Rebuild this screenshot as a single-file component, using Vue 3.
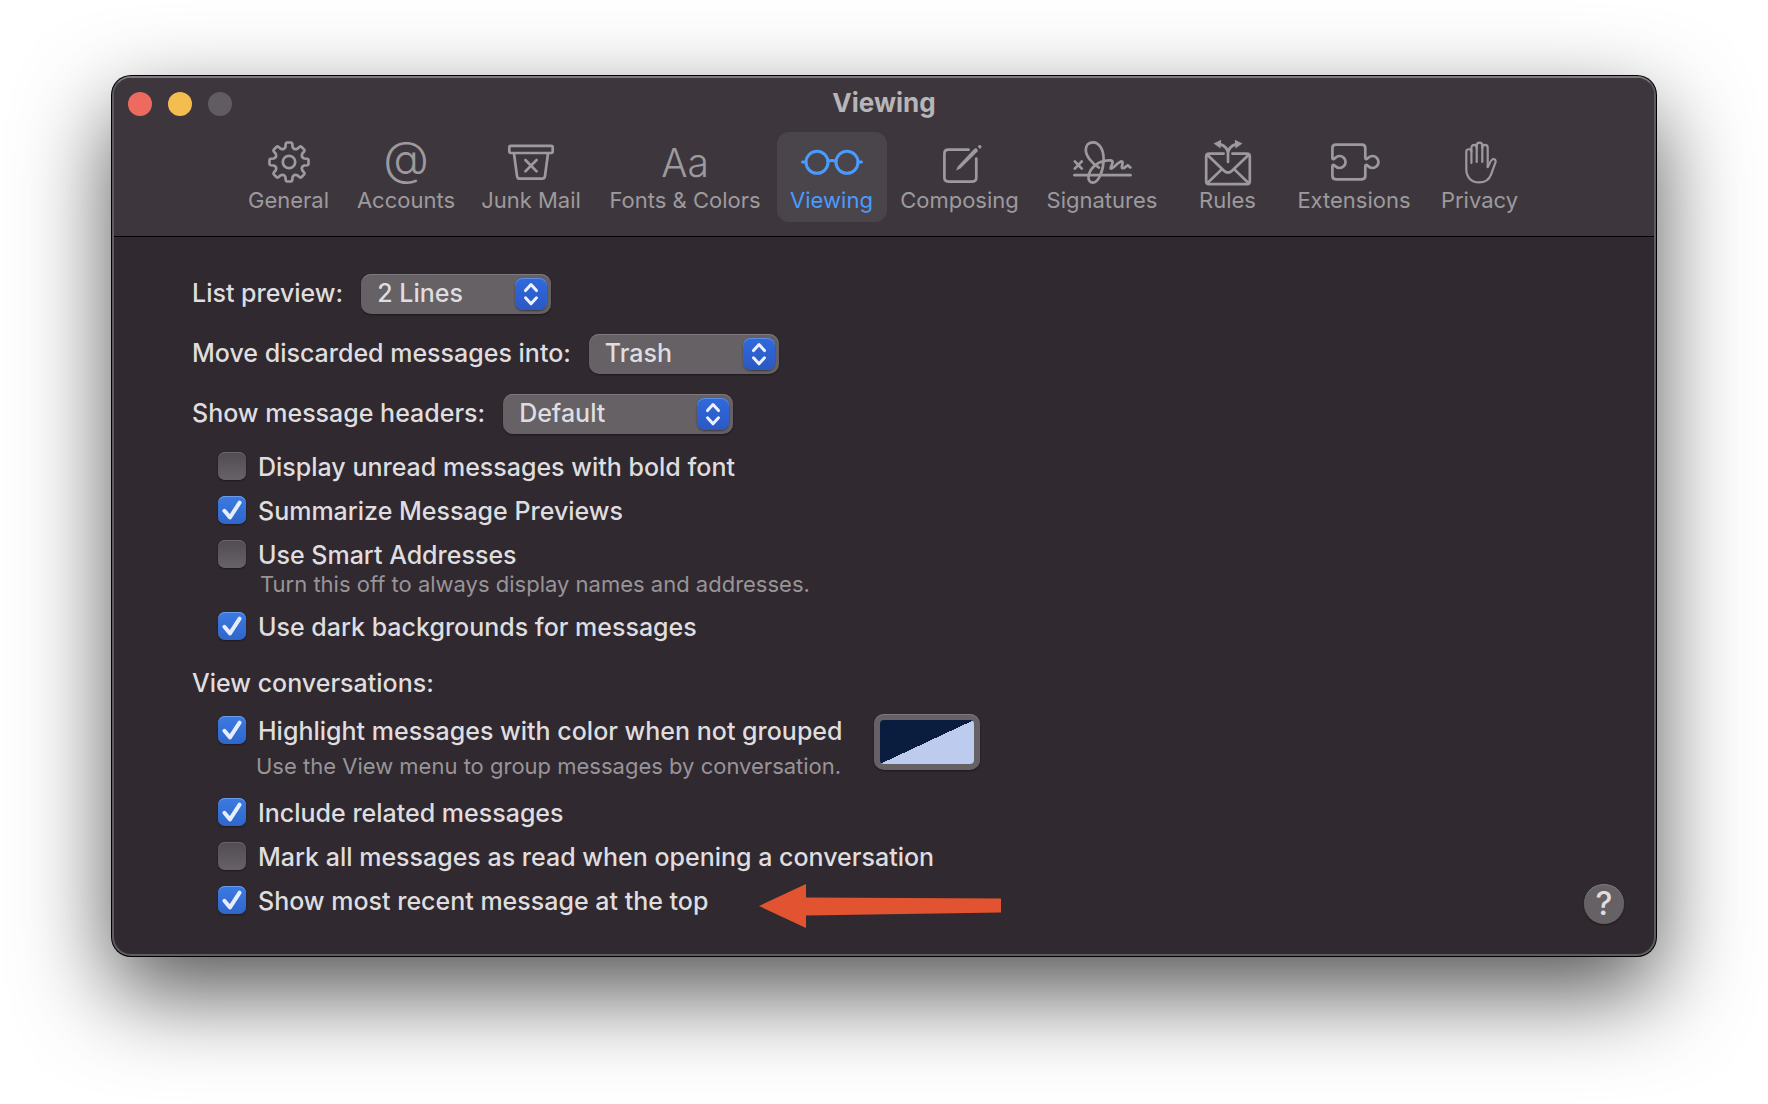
<script setup>
import { ref } from 'vue'

const active = ref('viewing')

function gearPath(cx, cy, outer, root) {
  const point = (deg, r) => {
    const a = (deg * Math.PI) / 180
    return `${(cx + r * Math.sin(a)).toFixed(2)} ${(cy - r * Math.cos(a)).toFixed(2)}`
  }
  let d = ''
  for (let i = 0; i < 8; i++) {
    const a = i * 45
    d += `${i ? 'L' : 'M'}${point(a - 13, root + 1.5)} L${point(a - 10, outer - 1)} Q${point(a - 9, outer)} ${point(a - 6, outer)} `
    d += `L${point(a + 6, outer)} Q${point(a + 9, outer)} ${point(a + 10, outer - 1)} L${point(a + 13, root + 1.5)} `
    d += `Q${point(a + 22.5, root - 1.6)} ${point(a + 32, root + 1.5)} `
  }
  return d + 'Z'
}

const tabs = [
  { id: 'general', label: 'General', width: 110, paths: [gearPath(32, 24, 19.6, 14.2), 'M25.8 24a6.2 6.2 0 1 0 12.4 0a6.2 6.2 0 1 0 -12.4 0'] },
  { id: 'accounts', label: 'Accounts', width: 125, glyph: '@' },
  {
    id: 'junk', label: 'Junk Mail', width: 125,
    paths: [
      'M11.7 7.8H52.3Q53.7 7.8 53.7 9.2V13.6Q53.7 15 52.3 15H11.7Q10.3 15 10.3 13.6V9.2Q10.3 7.8 11.7 7.8Z',
      'M15 15.5L18 38Q18.4 40.7 21 40.7H43Q45.6 40.7 46 38L49 15.5',
      'M26.4 22L37.6 33.4M37.6 22L26.4 33.4',
    ],
  },
  { id: 'fonts', label: 'Fonts & Colors', width: 183, glyph: 'Aa' },
  {
    id: 'viewing', label: 'Viewing', width: 110, stroke: 3,
    paths: [
      'M6 24.3a11 11 0 1 0 22 0a11 11 0 1 0 -22 0',
      'M36 24.3a11 11 0 1 0 22 0a11 11 0 1 0 -22 0',
      'M2.5 24H6M58 24H61.5M28 23.4Q32 21.6 36 23.4',
    ],
  },
  {
    id: 'composing', label: 'Composing', width: 146,
    paths: ['M40.5 11.7H20.4Q16.4 11.7 16.4 15.7V39.6Q16.4 43.6 20.4 43.6H44.3Q48.3 43.6 48.3 39.6V20.5'],
    fills: ['M28 32.6L30 28.2L46.6 10.6Q48.2 9.8 49.4 11L49.8 13.2L32.4 30.4Z', 'M49.6 8.4L51 7.2Q52 6.6 53 7.4Q54 8.6 53.2 9.6L52 10.9Z'],
  },
  {
    id: 'signatures', label: 'Signatures', width: 139,
    paths: [
      'M4.5 37.2H60.5',
      'M4.8 23.4L11.8 30.6M11.8 23.4L4.8 30.6',
      'M29 29.6C22 25.5 15.8 18 15.8 12C15.8 7 19 4.4 23 4.4C29.5 4.4 33.6 12 33.6 21C33.6 32 28.8 44.6 22.6 44.6C19.5 44.6 18 41.6 18.6 38C19.6 31 26.4 24.6 34 23C38 22.1 42.8 21.8 42.6 24.4C42.4 26.6 39.6 30.6 41 30.6C43.4 30.4 48.4 23.6 51.6 23.4C54.4 23.6 50.4 29.8 52.4 30.2C54.4 30.6 56.4 28 57.6 27.4C59 27 58.6 29.4 60.4 29.4',
    ],
  },
  {
    id: 'rules', label: 'Rules', width: 112,
    paths: [
      'M27.6 15.6H13.2Q10.2 15.6 10.2 18.6V43.2Q10.2 46.2 13.2 46.2H50.8Q53.8 46.2 53.8 43.2V18.6Q53.8 15.6 50.8 15.6H36.4',
      'M11.5 17L28 32.8Q32 36.6 36 32.8L52.5 17',
      'M11.5 45L25.4 31.6M52.5 45L38.6 31.6',
      'M32 24V15Q31 8.6 24.6 6.4M32 15Q33 8.6 39.4 6.4',
    ],
    fills: ['M17.6 5.6L25.2 1.8L24.6 10.4Z', 'M46.4 5.6L38.8 1.8L39.4 10.4Z'],
  },
  {
    id: 'extensions', label: 'Extensions', width: 141,
    paths: [
      'M10.4 20.6V10.2Q10.4 6.7 13.9 6.7H39.8Q43.3 6.7 43.3 10.2V19.6C43.3 21.6 44.9 21.6 46 20A6 6 0 1 1 46 28C44.9 26.4 43.3 26.4 43.3 28.4V37.8Q43.3 41.3 39.8 41.3H13.9Q10.4 41.3 10.4 37.8V28.4C10.4 26.4 12 26.4 13.1 28A6 6 0 1 0 13.1 20C12 21.6 10.4 21.6 10.4 19.6',
    ],
  },
  {
    id: 'privacy', label: 'Privacy', width: 110, stroke: 2.2,
    paths: [
      'M23.4 25V13.8a2.55 2.55 0 0 0 -5.1 0V31C18.3 39 23 44.4 31 44.4C37 44.4 41 42 43 36.6L47.4 24.6C48 22.8 47.4 21.2 45.6 21C42.6 21 41.6 26 39.7 29',
      'M23.4 14V9.6a2.65 2.65 0 0 1 5.3 0V24',
      'M28.7 9.6V7.4a2.8 2.8 0 0 1 5.6 0V24',
      'M34.3 9.6a2.7 2.7 0 0 1 5.4 0V29',
    ],
  },
]

const menus = ref([
  { id: 'preview', label: 'List preview:', value: '2 Lines', options: ['2 Lines', 'None', '1 Line'] },
  { id: 'discard', label: 'Move discarded messages into:', value: 'Trash', options: ['Trash', 'Archive'] },
  { id: 'headers', label: 'Show message headers:', value: 'Default', options: ['Default', 'All', 'Custom'], wide: true },
])

const display = ref([
  { id: 'bold', label: 'Display unread messages with bold font', on: false },
  { id: 'summarize', label: 'Summarize Message Previews', on: true },
  { id: 'smart', label: 'Use Smart Addresses', on: false, note: 'Turn this off to always display names and addresses.' },
  { id: 'dark', label: 'Use dark backgrounds for messages', on: true },
])

const highlight = ref(true)

const conversations = ref([
  { id: 'related', label: 'Include related messages', on: true },
  { id: 'markread', label: 'Mark all messages as read when opening a conversation', on: false },
  { id: 'recent', label: 'Show most recent message at the top', on: true, arrow: true },
])
</script>

<template>
  <div class="desktop">
    <section class="window" aria-label="Viewing preferences">
      <header class="toolbar">
        <div class="titlebar">
          <div class="lights">
            <button class="light close" aria-label="Close"></button>
            <button class="light minimize" aria-label="Minimize"></button>
            <button class="light zoom" aria-label="Zoom" disabled></button>
          </div>
          <h1 class="title">Viewing</h1>
        </div>
        <nav class="tabs">
          <button
            v-for="tab in tabs"
            :key="tab.id"
            class="tab"
            :class="{ active: active === tab.id }"
            :style="{ width: tab.width + 'px' }"
            @click="active = tab.id"
          >
            <span v-if="tab.glyph" class="glyph" :class="tab.id" aria-hidden="true">{{ tab.glyph }}</span>
            <svg v-else class="icon" viewBox="0 0 64 48" :stroke-width="tab.stroke || 2.7" aria-hidden="true">
              <path v-for="d in tab.paths" :key="d" :d="d" />
              <path v-for="d in tab.fills" :key="d" :d="d" class="solid" />
            </svg>
            <span class="tab-label">{{ tab.label }}</span>
          </button>
        </nav>
      </header>

      <main class="content">
        <form class="form" @submit.prevent>
          <div class="menus">
            <div v-for="menu in menus" :key="menu.id" class="menu-row">
              <label :for="menu.id">{{ menu.label }}</label>
              <div class="popup" :class="{ wide: menu.wide }">
                <select :id="menu.id" v-model="menu.value">
                  <option v-for="o in menu.options" :key="o">{{ o }}</option>
                </select>
                <svg class="stepper" viewBox="0 0 32 32" aria-hidden="true">
                  <path d="M10.5 12.6L16 6.6L21.5 12.6M10.5 19.8L16 25.8L21.5 19.8" />
                </svg>
              </div>
            </div>
          </div>

          <div class="checks">
            <div v-for="item in display" :key="item.id" class="check-item">
              <label class="check">
                <span class="box">
                  <input v-model="item.on" type="checkbox" />
                  <svg v-if="item.on" viewBox="0 0 28 28" aria-hidden="true"><path d="M6.4 14.8L12 21.4L21.6 6.6" /></svg>
                </span>
                <span class="check-text">{{ item.label }}</span>
              </label>
              <p v-if="item.note" class="note">{{ item.note }}</p>
            </div>
          </div>

          <h2 class="group-title">View conversations:</h2>

          <div class="highlight">
            <div class="highlight-text">
              <label class="check">
                <span class="box">
                  <input v-model="highlight" type="checkbox" />
                  <svg v-if="highlight" viewBox="0 0 28 28" aria-hidden="true"><path d="M6.4 14.8L12 21.4L21.6 6.6" /></svg>
                </span>
                <span class="check-text">Highlight messages with color when not grouped</span>
              </label>
              <p class="note">Use the View menu to group messages by conversation.</p>
            </div>
            <button class="swatch" type="button" aria-label="Highlight color"><span class="swatch-color"></span></button>
          </div>

          <div class="checks">
            <div v-for="item in conversations" :key="item.id" class="check-item">
              <label class="check">
                <span class="box">
                  <input v-model="item.on" type="checkbox" />
                  <svg v-if="item.on" viewBox="0 0 28 28" aria-hidden="true"><path d="M6.4 14.8L12 21.4L21.6 6.6" /></svg>
                </span>
                <span class="check-text">{{ item.label }}</span>
                <svg v-if="item.arrow" class="arrow" viewBox="0 0 244 46" aria-hidden="true">
                  <path d="M1 23L48 1V14.5L243 15.5V29.5L48 32.5V45Z" />
                </svg>
              </label>
            </div>
          </div>
        </form>
        <button class="help" aria-label="Help">?</button>
      </main>
    </section>
  </div>
</template>

<style>
body {
  margin: 0;
  background: #fff;
}
</style>

<style scoped>
.desktop {
  box-sizing: border-box;
  min-height: 100vh;
  padding: 76px 112px 144px;
  overflow: hidden;
  font-family: Inter, "Liberation Sans", sans-serif;
  font-size: 25px;
  font-weight: 500;
  line-height: 28px;
  color: #dfdddf;
}

button,
select,
input {
  margin: 0;
  padding: 0;
  border: 0;
  font: inherit;
  color: inherit;
}

.window {
  border: 2px solid #5f5b60;
  border-top-color: #7e7a7f;
  border-radius: 19px;
  background: #30292f;
  box-shadow: 0 0 0 1px #000, 0 36px 92px rgba(0, 0, 0, 0.68);
}

.toolbar {
  height: 158px;
  border-bottom: 1px solid #000;
  border-radius: 17px 17px 0 0;
  background: #3d373d;
}

.titlebar {
  display: grid;
  grid-template-columns: 1fr auto 1fr;
  align-items: center;
  height: 52px;
  padding-bottom: 2px;
}

.lights {
  display: flex;
  gap: 16px;
  padding-left: 14px;
}

.light {
  width: 24px;
  height: 24px;
  border-radius: 50%;
}

.close {
  background: #ed6a5e;
}

.minimize {
  background: #f4bd50;
}

.zoom {
  background: #615c61;
}

.title {
  margin: 0;
  padding-bottom: 2px;
  font-size: 26px;
  font-weight: 700;
  color: #b8b5b8;
}

.tabs {
  display: flex;
  justify-content: center;
}

.tab {
  display: flex;
  flex-direction: column;
  align-items: center;
  box-sizing: border-box;
  height: 90px;
  padding-top: 6px;
  border-radius: 12px;
  background: none;
  color: #9d9a9d;
  white-space: nowrap;
}

.tab.active {
  background: #4a454a;
  color: #4a9bff;
}

.icon {
  width: 64px;
  height: 48px;
  fill: none;
  stroke: currentColor;
  stroke-linecap: round;
  stroke-linejoin: round;
}

.solid {
  fill: currentColor;
  stroke: none;
}

.glyph {
  height: 48px;
  font-size: 39px;
  font-weight: 300;
  line-height: 50px;
}

.glyph.accounts {
  font-size: 47px;
  line-height: 40px;
}

.tab-label {
  font-size: 22px;
  font-weight: 400;
}

.content {
  display: flex;
  align-items: flex-end;
  padding: 37px 30px 30px 78px;
}

.form {
  flex: 1;
  padding-bottom: 10px;
}

.menus {
  display: flex;
  flex-direction: column;
  gap: 20px;
  margin-bottom: 18px;
}

.menu-row {
  display: flex;
  align-items: center;
  gap: 18px;
}

.menu-row label {
  padding-bottom: 2px;
}

.popup {
  display: grid;
  align-items: center;
  width: 190px;
}

.popup.wide {
  width: 230px;
}

.popup > * {
  grid-area: 1 / 1;
}

select {
  width: 100%;
  height: 40px;
  padding: 0 44px 2px 16px;
  border-radius: 10px;
  background: #656165;
  box-shadow: inset 0 1px #7d797d, 0 1px 2px rgba(0, 0, 0, 0.4);
  appearance: none;
}

.stepper {
  justify-self: end;
  width: 32px;
  height: 32px;
  margin-right: 4px;
  border-radius: 8px;
  background: linear-gradient(#3069dd, #2b59c3);
  box-shadow: inset 0 1px #5e8de6, 0 1px 2px rgba(0, 0, 0, 0.4);
  fill: none;
  stroke: #eef2fc;
  stroke-width: 3;
  stroke-linecap: round;
  stroke-linejoin: round;
  pointer-events: none;
}

.checks {
  display: flex;
  flex-direction: column;
  gap: 16px;
  padding-left: 26px;
}

.check-item {
  display: flex;
  flex-direction: column;
  align-items: flex-start;
}

.check {
  position: relative;
  display: flex;
  gap: 12px;
  height: 28px;
}

.check-text {
  line-height: 30px;
}

.check-item:has(.note) {
  margin-bottom: -2px;
}

.box {
  display: grid;
  width: 28px;
  height: 28px;
}

.box > * {
  grid-area: 1 / 1;
}

.box input {
  width: 28px;
  height: 28px;
  border-radius: 7px;
  background: linear-gradient(#514c51, #676267);
  box-shadow: inset 0 1px #6a656a, 0 1px 2px rgba(0, 0, 0, 0.4);
  appearance: none;
}

.box input:checked {
  background: linear-gradient(#3b7ae2, #2f66cb);
  box-shadow: inset 0 1px #6b9cec, 0 1px 2px rgba(0, 0, 0, 0.4);
}

.box svg {
  fill: none;
  stroke: #e6edfb;
  stroke-width: 4;
  stroke-linecap: round;
  stroke-linejoin: round;
  pointer-events: none;
}

.note {
  margin: 2px 0 0 42px;
  font-size: 22px;
  font-weight: 400;
  color: #989498;
}

.group-title {
  margin: 29px 0 19px;
  font-size: inherit;
  font-weight: inherit;
}

.highlight {
  display: flex;
  align-items: flex-start;
  gap: 32px;
  margin-bottom: 18px;
  padding-left: 26px;
}

.highlight-text {
  display: grid;
  gap: 8px;
}

.highlight .note {
  margin: 0 0 0 38px;
}

.swatch {
  box-sizing: border-box;
  width: 106px;
  height: 56px;
  margin-top: -2px;
  padding: 6px;
  border-radius: 10px;
  background: #656165;
  box-shadow: inset 0 1px #7d797d, 0 1px 2px rgba(0, 0, 0, 0.4);
}

.swatch-color {
  display: block;
  height: 44px;
  border-radius: 4px;
  background: linear-gradient(to bottom right, #0b1d3f 50%, #bccbee 50%);
}

.arrow {
  position: absolute;
  top: -3px;
  left: calc(100% + 50px);
  width: 244px;
  height: 46px;
  fill: #e25431;
}

.help {
  width: 40px;
  height: 40px;
  border-radius: 50%;
  background: #656165;
  box-shadow: inset 0 1px #7d797d, 0 1px 2px rgba(0, 0, 0, 0.4);
  font-size: 32px;
  line-height: 40px;
}
</style>
